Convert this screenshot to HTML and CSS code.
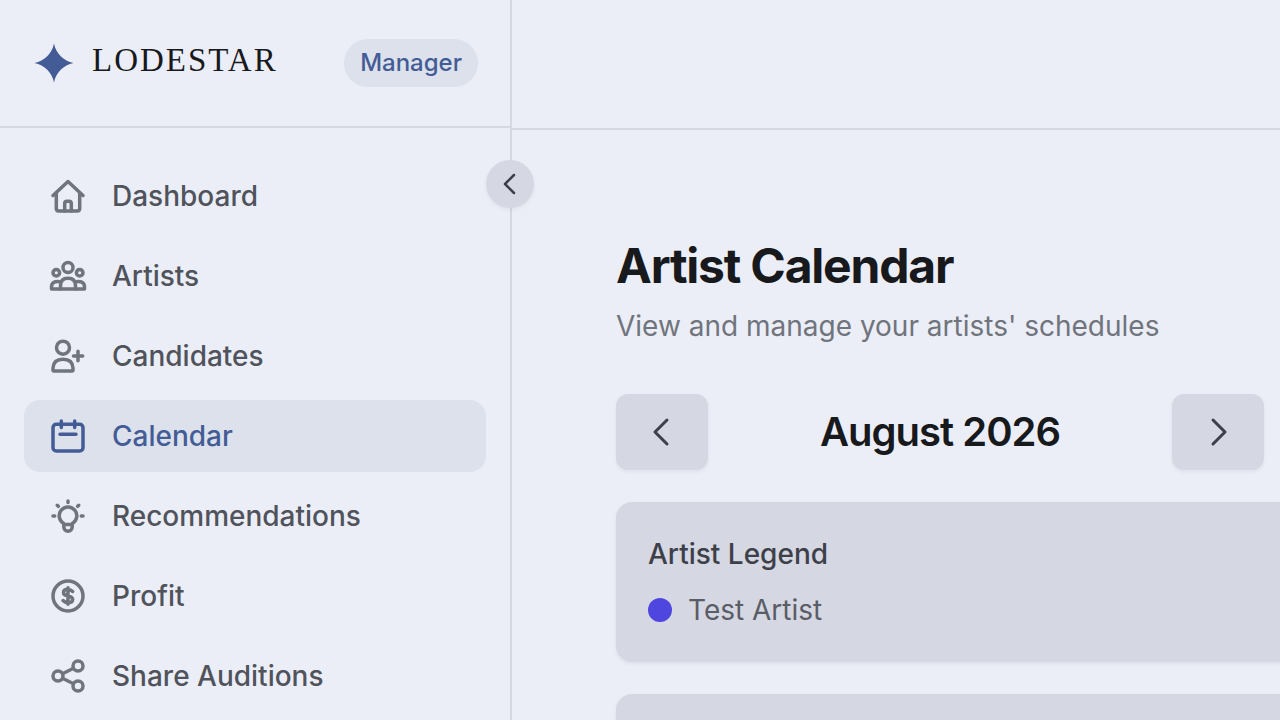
FILE: index.html
```html
<!DOCTYPE html>
<html lang="en">
<head>
    <meta charset="UTF-8">
    <title>Artist Calendar</title>
    <link rel="stylesheet" href="styles.css">
</head>
<body>
<div class="app">
    <aside class="sidebar">
        <div class="brand">
            <svg class="star" viewBox="0 0 40 40"><path d="M20 0.500C22 10.500 29.500 18 39.500 20C29.500 22 22 29.500 20 39.500C18 29.500 10.500 22 0.500 20C10.500 18 18 10.500 20 0.500Z"/></svg>
            <span class="logo">LODESTAR</span>
            <span class="role">Manager</span>
        </div>
        <button class="toggle" type="button" aria-label="Collapse sidebar">
            <svg class="chevron" viewBox="0 0 24 24"><path d="M16 3L7 12L16 21"/></svg>
        </button>
        <nav class="nav">
            <a href="#">
                <svg viewBox="0 0 40 40"><path d="M5 19.500L20 5.500L35 19.500"/><path d="M8.300 17V32.500Q8.300 35 10.800 35H29.200Q31.700 35 31.700 32.500V17"/><path d="M16.700 35V27.500Q16.700 25.200 19 25.200H21Q23.300 25.200 23.300 27.500V35"/></svg>
                Dashboard
            </a>
            <a href="#">
                <svg viewBox="0 0 40 40"><circle cx="20" cy="11.500" r="5"/><circle cx="8.300" cy="16.700" r="3.300"/><circle cx="31.700" cy="16.700" r="3.300"/><path d="M12.500 33V30Q12.500 22.300 20 22.300Q27.500 22.300 27.500 30V33Z"/><path d="M12 25.700Q3.500 24.500 3.500 31V33H12.500M28 25.700Q36.500 24.500 36.500 31V33H27.500"/></svg>
                Artists
            </a>
            <a href="#">
                <svg viewBox="0 0 40 40"><circle cx="15" cy="11.700" r="6.500"/><path d="M5 34V32Q5.500 23.300 15 23.300Q24.500 23.300 25 32V34Q25 35 24 35H6Q5 35 5 34Z"/><path d="M25.500 20H34.700M30 15.300V24.700"/></svg>
                Candidates
            </a>
            <a class="active" href="#">
                <svg viewBox="0 0 40 40"><rect x="5" y="8.300" width="30" height="26.700" rx="3.300"/><path d="M13.300 5V11.500M26.700 5V11.500M12 18.300H28"/></svg>
                Calendar
            </a>
            <a href="#">
                <svg viewBox="0 0 40 40"><path d="M15.800 28.500V27.500A8.800 8.800 0 1 1 24.200 27.500V28.500Z"/><path d="M15.800 28.500V31A4.200 4.200 0 0 0 24.200 31V28.500"/><path d="M20 5V6.500M5 20H6.700M33.300 20H35M9.300 9.300L10.300 10.300M30.700 9.300L29.700 10.300"/></svg>
                Recommendations
            </a>
            <a href="#">
                <svg viewBox="0 0 40 40"><circle cx="20" cy="20" r="15"/><path d="M24.700 15.500Q22.500 13.300 19 13.300Q15.500 13.500 15.500 16.500Q15.500 19.200 20 20Q24.700 21 24.700 23.500Q24.500 26.700 20.500 26.700Q17 26.700 15 24.500M20 11.700V28.300"/></svg>
                Profit
            </a>
            <a href="#">
                <svg viewBox="0 0 40 40"><circle cx="10" cy="20" r="5"/><circle cx="30" cy="10" r="5"/><circle cx="30" cy="30" r="5"/><path d="M14.500 17.700L25.500 12.300M14.500 22.300L25.500 27.700"/></svg>
                Share Auditions
            </a>
        </nav>
    </aside>
    <main class="main">
        <header class="topbar"></header>
        <section class="content">
            <h1>Artist Calendar</h1>
            <p class="subtitle">View and manage your artists' schedules</p>
            <div class="month">
                <button type="button" aria-label="Previous month">
                    <svg viewBox="0 0 32 32"><path d="M21 4L9 16L21 28"/></svg>
                </button>
                <h2>August 2026</h2>
                <button type="button" aria-label="Next month">
                    <svg viewBox="0 0 32 32"><path d="M11 4L23 16L11 28"/></svg>
                </button>
            </div>
            <div class="card">
                <h3>Artist Legend</h3>
                <div class="artist"><span class="dot"></span>Test Artist</div>
            </div>
            <div class="card calendar"></div>
        </section>
    </main>
</div>
</body>
</html>
```
FILE: styles.css
```css
* {
    box-sizing: border-box;
    margin: 0;
    padding: 0;
}
body {
    background-color: #ebeef6;
    color: #18191c;
    font-family: "Inter", sans-serif;
    font-size: 28px;
    line-height: 40px;
    font-optical-sizing: none;
    overflow: hidden;
}
svg {
    display: block;
    flex: none;
    fill: none;
    stroke: currentColor;
    stroke-width: 3.5;
    stroke-linecap: round;
    stroke-linejoin: round;
}
button {
    display: flex;
    align-items: center;
    justify-content: center;
    border: none;
    background-color: #d5d7e2;
    color: #3d4049;
    cursor: pointer;
    box-shadow: 0 2px 4px rgba(0, 0, 0, 0.05);
}
.app {
    display: flex;
    height: 100vh;
}

/* sidebar */
.sidebar {
    position: relative;
    flex: none;
    width: 512px;
    border-right: 2px solid #d5d7e2;
}
.brand {
    display: flex;
    align-items: center;
    height: 128px;
    padding: 0 32px 0 34px;
    border-bottom: 2px solid #d5d7e2;
}
.star {
    width: 40px;
    height: 40px;
    fill: #445c96;
    stroke: none;
}
.logo {
    margin-left: 18px;
    padding-bottom: 6px;
    font-family: "Liberation Serif", serif;
    font-size: 33px;
    letter-spacing: 2px;
}
.role {
    margin-left: auto;
    padding: 0 16px;
    border-radius: 24px;
    background-color: #dce1ec;
    color: #445c96;
    font-size: 24px;
    font-weight: 500;
    line-height: 48px;
}
.toggle {
    position: absolute;
    top: 160px;
    right: -24px;
    z-index: 10;
    width: 48px;
    height: 48px;
    border-radius: 50%;
}
.chevron {
    width: 24px;
    height: 24px;
    stroke-width: 2.5;
}
.nav {
    display: flex;
    flex-direction: column;
    gap: 8px;
    padding: 32px 24px;
}
.nav a {
    display: flex;
    align-items: center;
    gap: 24px;
    height: 72px;
    padding: 0 24px;
    border-radius: 16px;
    color: #50535c;
    font-weight: 500;
    text-decoration: none;
}
.nav svg {
    width: 40px;
    height: 40px;
    color: #70747d;
}
.nav .active,
.nav .active svg {
    color: #445c96;
}
.nav .active {
    background-color: #dce1ec;
}

/* main */
.main {
    flex: 1;
    min-width: 0;
    overflow: hidden;
}
.topbar {
    height: 130px;
    border-bottom: 2px solid #d5d7e2;
}
.content {
    padding: 108px 16px 0 104px;
}
h1 {
    font-size: 48px;
    font-weight: 700;
    line-height: 56px;
    letter-spacing: -0.025em;
}
.subtitle {
    margin-top: 12px;
    color: #70747d;
}
.month {
    display: flex;
    align-items: center;
    justify-content: space-between;
    margin-top: 48px;
}
.month button {
    width: 92px;
    height: 76px;
    border-radius: 12px;
}
.month svg {
    width: 32px;
    height: 32px;
    stroke-width: 3;
}
h2 {
    font-size: 40px;
    font-weight: 600;
    line-height: 56px;
    letter-spacing: -0.025em;
}
.card {
    margin-top: 32px;
    margin-right: -40px;
    padding: 32px;
    border-radius: 16px;
    background-color: #d5d7e2;
    box-shadow: 0 2px 4px rgba(0, 0, 0, 0.06);
}
h3 {
    color: #3d4049;
    font-size: 28px;
    font-weight: 500;
}
.artist {
    display: flex;
    align-items: center;
    gap: 16px;
    margin-top: 16px;
    color: #5a5d66;
}
.dot {
    width: 24px;
    height: 24px;
    border-radius: 50%;
    background-color: #4f46e0;
}
.calendar {
    height: 600px;
}
```
